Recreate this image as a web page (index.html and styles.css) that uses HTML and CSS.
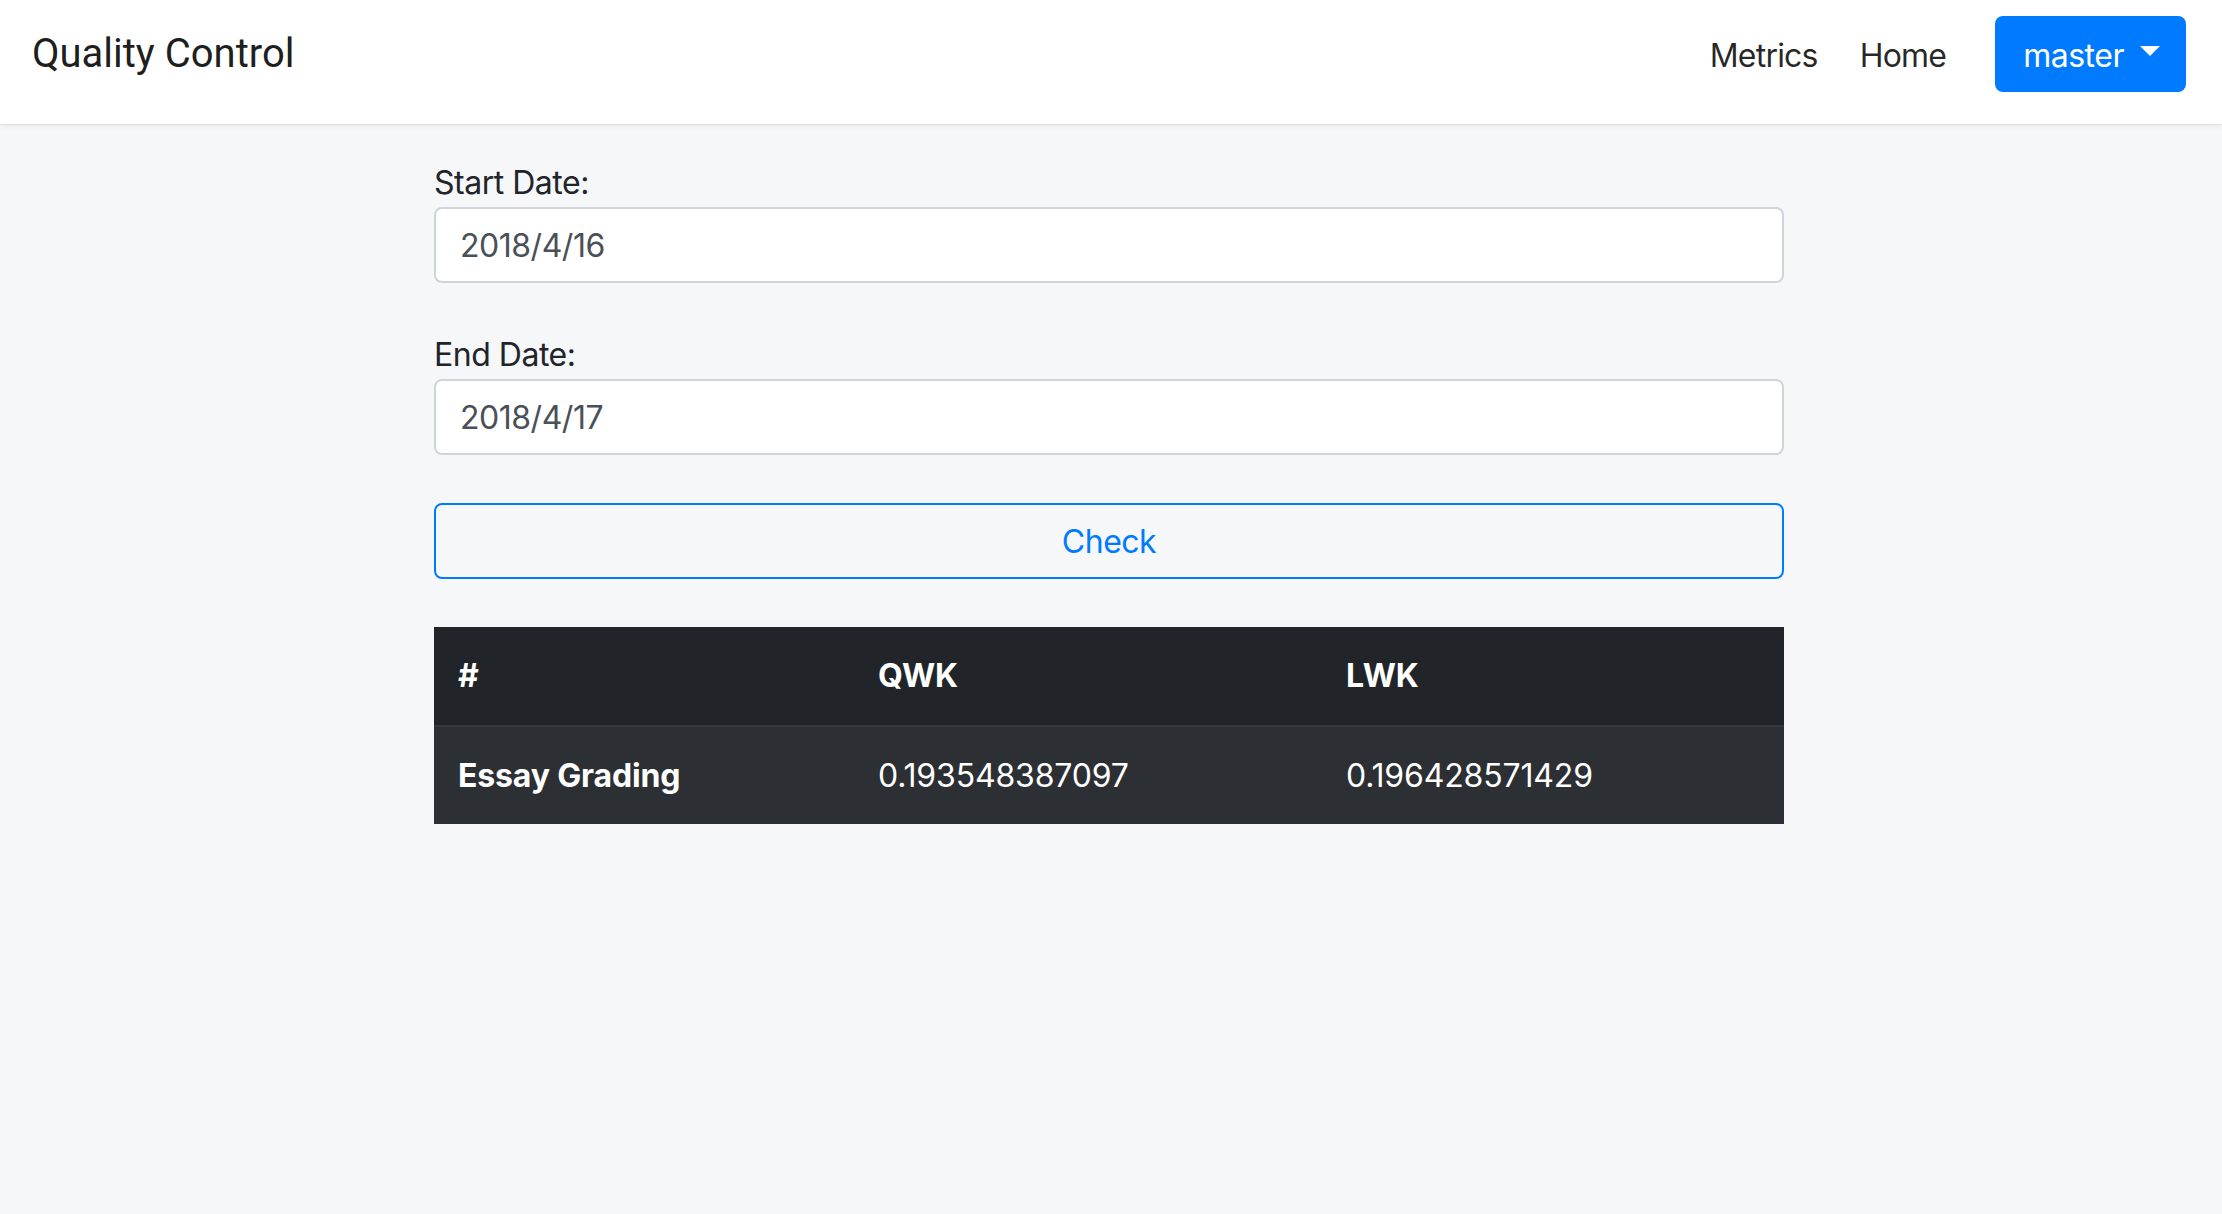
FILE: index.html
```html
<!DOCTYPE html>
<html lang="en">
<head>
<meta charset="utf-8">
<title>Quality Control</title>
<link rel="stylesheet" href="styles.css">
</head>
<body>
<nav class="navbar">
  <a class="brand" href="#">Quality Control</a>
  <div class="nav-right">
    <a class="nav-link" href="#">Metrics</a>
    <a class="nav-link" href="#">Home</a>
    <button class="btn-master" type="button">master<span class="caret"></span></button>
  </div>
</nav>
<main class="content">
  <div class="form-group">
    <label class="label" for="start">Start Date:</label>
    <input class="input" id="start" type="text" value="2018/4/16">
  </div>
  <div class="form-group">
    <label class="label" for="end">End Date:</label>
    <input class="input" id="end" type="text" value="2018/4/17">
  </div>
  <button class="btn-check" type="button">Check</button>
  <table class="table">
    <colgroup>
      <col class="col-a">
      <col class="col-b">
      <col class="col-c">
    </colgroup>
    <thead>
      <tr><th>#</th><th>QWK</th><th>LWK</th></tr>
    </thead>
    <tbody>
      <tr><th>Essay Grading</th><td>0.193548387097</td><td>0.196428571429</td></tr>
    </tbody>
  </table>
</main>
</body>
</html>
```
FILE: styles.css
```css
* { box-sizing: border-box; }
html, body {
  margin: 0;
  padding: 0;
}
body {
  background: #f6f7f9;
  font-family: Inter, Roboto, "Liberation Sans", sans-serif;
  font-size: 32px;
  line-height: 48px;
  color: #212529;
  letter-spacing: -0.015em;
}
.navbar {
  height: 124px;
  background: #fff;
  display: flex;
  align-items: flex-start;
  justify-content: space-between;
  padding: 16px 36px 0 32px;
  box-shadow: 0 1px 2px rgba(0,0,0,0.08), 0 2px 8px rgba(0,0,0,0.05);
  position: relative;
}
.brand {
  font-family: Roboto, "Liberation Sans", sans-serif;
  letter-spacing: 0;
  font-size: 40px;
  line-height: 76px;
  color: rgba(0,0,0,0.9);
  text-decoration: none;
}
.nav-right {
  display: flex;
  align-items: center;
  height: 76px;
}
.nav-link {
  color: rgba(0,0,0,0.85);
  text-decoration: none;
  font-size: 32px;
  line-height: 48px;
  letter-spacing: -0.025em;
  padding-top: 3px;
  margin-right: 42px;
}
.nav-link + .btn-master { margin-left: 7px; }
.btn-master {
  height: 76px;
  background: #007bff;
  border: 0;
  border-radius: 8px;
  color: #fff;
  font-family: inherit;
  font-size: 32px;
  letter-spacing: -0.015em;
  padding: 3px 26px 0 28px;
  display: flex;
  align-items: center;
}
.caret {
  display: inline-block;
  margin-left: 16px;
  width: 0;
  height: 0;
  border-top: 10px solid #fff;
  border-left: 10px solid transparent;
  border-right: 10px solid transparent;
  margin-top: -10px;
}
.content {
  width: 1350px;
  margin: 0 auto;
  padding-top: 35px;
  position: relative;
  left: -2px;
}
.form-group {
  display: flex;
  flex-direction: column;
  margin-bottom: 48px;
}
.label {
  display: block;
  line-height: 48px;
  color: #212529;
}
.input {
  height: 76px;
  width: 100%;
  border: 2px solid #ced4da;
  border-radius: 8px;
  background: #fff;
  color: #495057;
  font-family: inherit;
  font-size: 32px;
  letter-spacing: -0.015em;
  padding: 0 24px;
}
.btn-check {
  display: block;
  width: 100%;
  height: 76px;
  border: 2px solid #007bff;
  border-radius: 8px;
  background: transparent;
  color: #007bff;
  font-family: inherit;
  font-size: 32px;
  letter-spacing: -0.015em;
  margin-bottom: 48px;
}
.table {
  width: 100%;
  border-collapse: collapse;
  table-layout: fixed;
  color: #fff;
  background: #212529;
  letter-spacing: -0.005em;
}
.col-a { width: 420px; }
.col-b { width: 468px; }
.table th, .table td {
  text-align: left;
  padding: 24px 24px;
  line-height: 48px;
  vertical-align: middle;
}
.table th { font-weight: 700; }
.table td { font-weight: 400; }
.table thead th {
  background: #212529;
  padding: 25px 24px 25px;
}
.table tbody tr {
  background: #2c3034;
  border-top: 2px solid #32383e;
}
.table tbody th, .table tbody td {
  padding: 25px 24px 24px;
}
```
